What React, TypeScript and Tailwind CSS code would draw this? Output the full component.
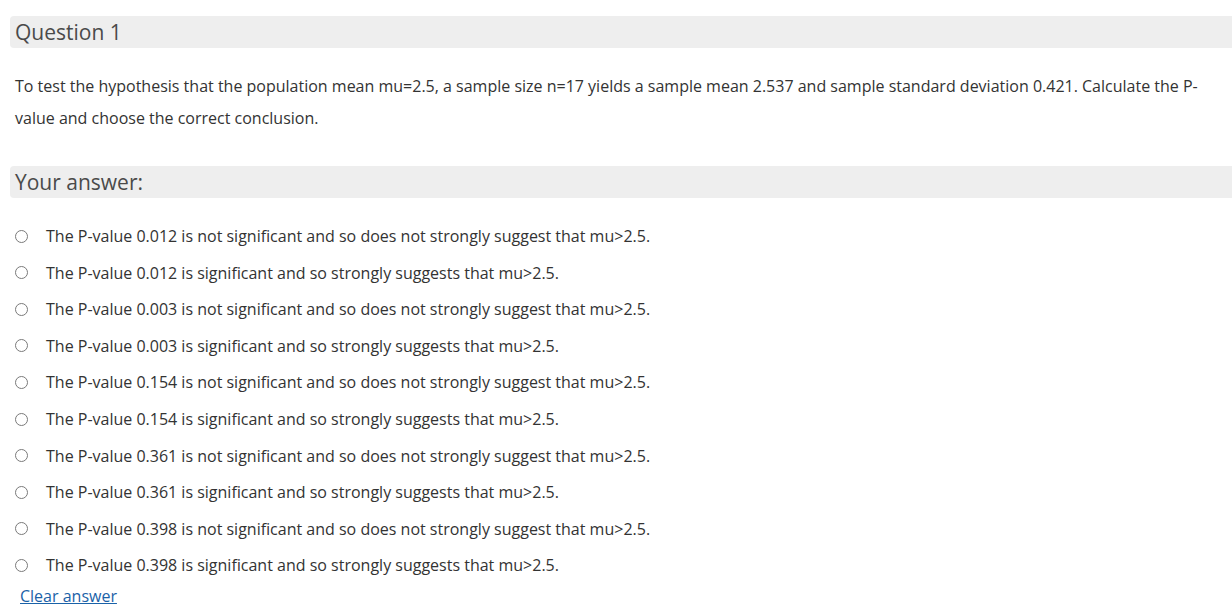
import React from "react";

const options = [
  "The P-value 0.012 is not significant and so does not strongly suggest that mu>2.5.",
  "The P-value 0.012 is significant and so strongly suggests that mu>2.5.",
  "The P-value 0.003 is not significant and so does not strongly suggest that mu>2.5.",
  "The P-value 0.003 is significant and so strongly suggests that mu>2.5.",
  "The P-value 0.154 is not significant and so does not strongly suggest that mu>2.5.",
  "The P-value 0.154 is significant and so strongly suggests that mu>2.5.",
  "The P-value 0.361 is not significant and so does not strongly suggest that mu>2.5.",
  "The P-value 0.361 is significant and so strongly suggests that mu>2.5.",
  "The P-value 0.398 is not significant and so does not strongly suggest that mu>2.5.",
  "The P-value 0.398 is significant and so strongly suggests that mu>2.5.",
];

export default function App() {
  return (
    <div
      className="w-[1232px] h-[613px] overflow-hidden bg-white text-[#333333]"
      style={{ fontFamily: '"Open Sans", "Noto Sans", sans-serif' }}
    >
      <div className="pt-[16px] pl-[10px]">
        <div className="h-[32px] bg-[#eeeeee] rounded-l-[4px] flex items-center pl-[5px] pt-[2px] text-[21px] text-[#4a4a4a]">
          Question 1
        </div>
      </div>
      <p className="mt-[22px] pl-[15px] pr-[20px] text-[16px] leading-[32px]">
        To test the hypothesis that the population mean mu=2.5, a sample size n=17 yields a sample mean 2.537 and sample standard deviation 0.421. Calculate the P-value and choose the correct conclusion.
      </p>
      <div className="mt-[32px] pl-[10px]">
        <div className="h-[32px] bg-[#eeeeee] rounded-l-[4px] flex items-center pl-[5px] pt-[2px] text-[21px] text-[#4a4a4a]">
          Your answer:
        </div>
      </div>
      <div className="mt-[20px] flex flex-col">
        {options.map((o, i) => (
          <div key={i} className="h-[36.56px] flex items-center pl-[15px]">
            <span className="w-[13px] h-[13px] rounded-full border border-[#7a7a7a] bg-white shrink-0" />
            <span className="ml-[18px] text-[16px] text-[#333333]">{o}</span>
          </div>
        ))}
      </div>
      <div className="pl-[20px] pt-[1px] leading-[24px]">
        <a href="#" className="text-[16px] text-[#1a62a8] underline">
          Clear answer
        </a>
      </div>
    </div>
  );
}
